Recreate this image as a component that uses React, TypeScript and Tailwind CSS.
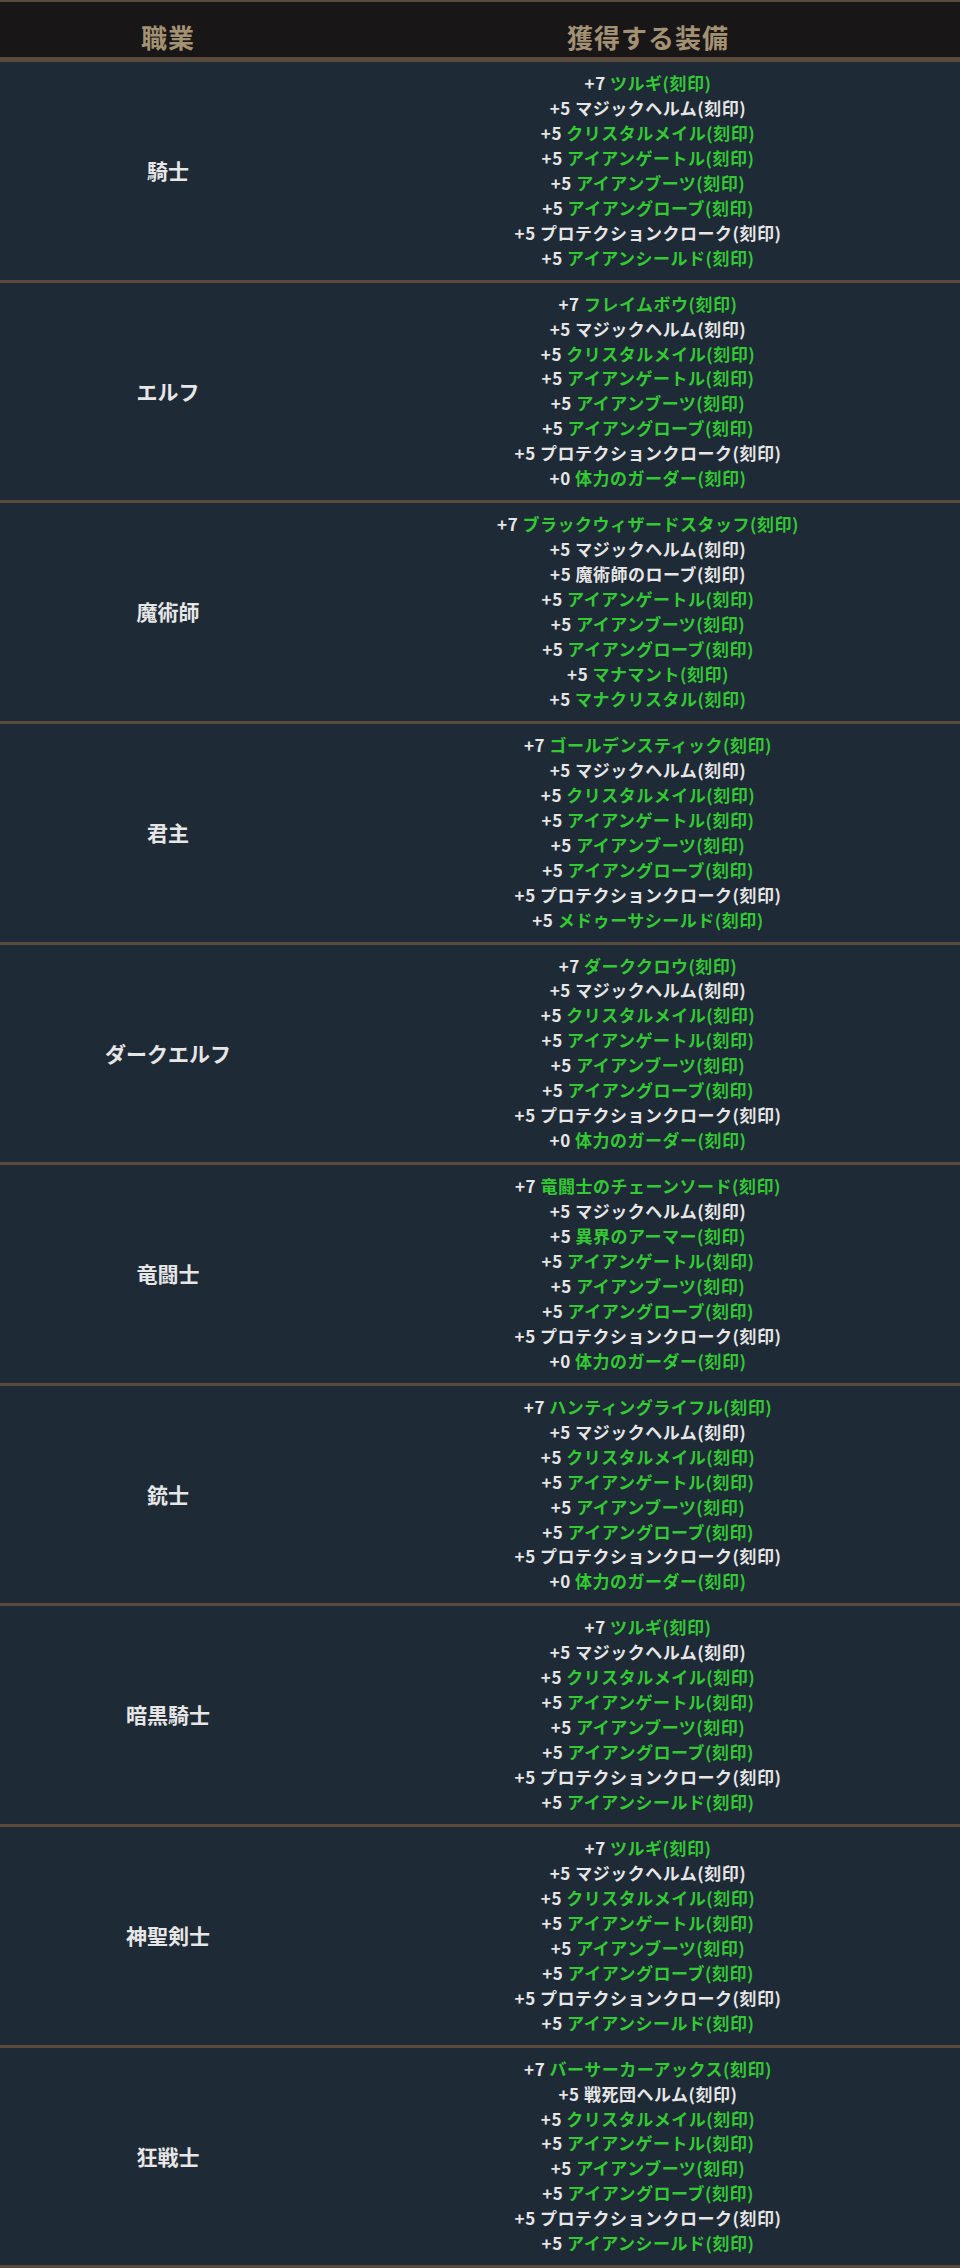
import React from 'react';

type Item = { plus: string; name: string; green: boolean };

interface JobRow {
  job: string;
  items: Item[];
}

const g = (plus: string, name: string): Item => ({ plus, name, green: true });
const w = (plus: string, name: string): Item => ({ plus, name, green: false });

const common = [
  w('+5', 'マジックヘルム'),
  g('+5', 'クリスタルメイル'),
  g('+5', 'アイアンゲートル'),
  g('+5', 'アイアンブーツ'),
  g('+5', 'アイアングローブ'),
  w('+5', 'プロテクションクローク'),
];

const rows: JobRow[] = [
  { job: '騎士', items: [g('+7', 'ツルギ'), ...common, g('+5', 'アイアンシールド')] },
  { job: 'エルフ', items: [g('+7', 'フレイムボウ'), ...common, g('+0', '体力のガーダー')] },
  {
    job: '魔術師',
    items: [
      g('+7', 'ブラックウィザードスタッフ'),
      w('+5', 'マジックヘルム'),
      w('+5', '魔術師のローブ'),
      g('+5', 'アイアンゲートル'),
      g('+5', 'アイアンブーツ'),
      g('+5', 'アイアングローブ'),
      g('+5', 'マナマント'),
      g('+5', 'マナクリスタル'),
    ],
  },
  { job: '君主', items: [g('+7', 'ゴールデンスティック'), ...common, g('+5', 'メドゥーサシールド')] },
  { job: 'ダークエルフ', items: [g('+7', 'ダーククロウ'), ...common, g('+0', '体力のガーダー')] },
  {
    job: '竜闘士',
    items: [
      g('+7', '竜闘士のチェーンソード'),
      w('+5', 'マジックヘルム'),
      g('+5', '異界のアーマー'),
      g('+5', 'アイアンゲートル'),
      g('+5', 'アイアンブーツ'),
      g('+5', 'アイアングローブ'),
      w('+5', 'プロテクションクローク'),
      g('+0', '体力のガーダー'),
    ],
  },
  { job: '銃士', items: [g('+7', 'ハンティングライフル'), ...common, g('+0', '体力のガーダー')] },
  { job: '暗黒騎士', items: [g('+7', 'ツルギ'), ...common, g('+5', 'アイアンシールド')] },
  { job: '神聖剣士', items: [g('+7', 'ツルギ'), ...common, g('+5', 'アイアンシールド')] },
  {
    job: '狂戦士',
    items: [
      g('+7', 'バーサーカーアックス'),
      w('+5', '戦死団ヘルム'),
      ...common.slice(1),
      g('+5', 'アイアンシールド'),
    ],
  },
];

export default function App() {
  return (
    <div className="w-[960px] bg-[#1f2a37] font-['Noto_Sans_CJK_JP','Noto_Sans',sans-serif] font-bold">
      <div className="grid grid-cols-[336px_1fr] h-[62px] border-t-2 border-b-[5px] border-[#5a4a3b] bg-[#181616] text-[26px] tracking-[1px] text-[#a39174]">
        <div className="flex items-center justify-center pt-[14px]">職業</div>
        <div className="flex items-center justify-center pt-[14px]">獲得する装備</div>
      </div>

      {rows.map((row) => (
        <div
          key={row.job}
          className="grid grid-cols-[336px_1fr] border-b-[3px] border-[#5a4a3b] py-[9px]"
        >
          <div className="flex items-center justify-center text-[21px] text-[#e6e6e6]">{row.job}</div>
          <div className="flex flex-col items-center text-[17px] tracking-[0.5px] leading-[24.95px] text-[#e6e6e6]">
            {row.items.map((item, i) => (
              <div key={i}>
                {item.plus}{' '}
                <span className={item.green ? 'text-[#33c933]' : ''}>{item.name}(刻印)</span>
              </div>
            ))}
          </div>
        </div>
      ))}
    </div>
  );
}
